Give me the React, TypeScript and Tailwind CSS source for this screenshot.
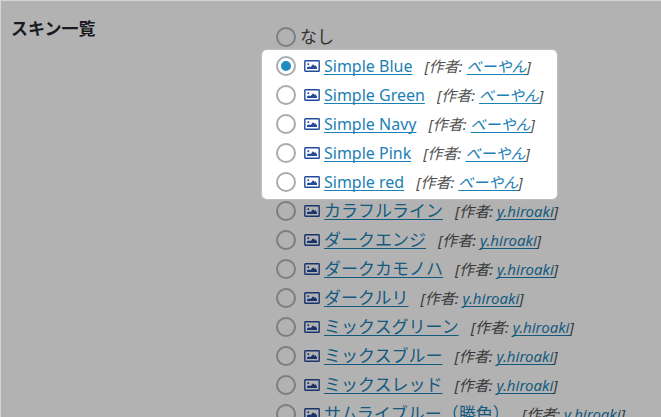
import { useState } from "react";
import clsx from "clsx";

type Skin = { id: string; name: string; author: string };

const FEATURED: Skin[] = [
  { id: "simple-blue", name: "Simple Blue", author: "べーやん" },
  { id: "simple-green", name: "Simple Green", author: "べーやん" },
  { id: "simple-navy", name: "Simple Navy", author: "べーやん" },
  { id: "simple-pink", name: "Simple Pink", author: "べーやん" },
  { id: "simple-red", name: "Simple red", author: "べーやん" },
];

const OTHERS: Skin[] = [
  { id: "colorful-line", name: "カラフルライン", author: "y.hiroaki" },
  { id: "dark-engi", name: "ダークエンジ", author: "y.hiroaki" },
  { id: "dark-kamonoha", name: "ダークカモノハ", author: "y.hiroaki" },
  { id: "dark-ruri", name: "ダークルリ", author: "y.hiroaki" },
  { id: "mix-green", name: "ミックスグリーン", author: "y.hiroaki" },
  { id: "mix-blue", name: "ミックスブルー", author: "y.hiroaki" },
  { id: "mix-red", name: "ミックスレッド", author: "y.hiroaki" },
  { id: "samurai-blue", name: "サムライブルー（勝色）", author: "y.hiroaki" },
];

function PictureIcon({ dimmed }: { dimmed?: boolean }) {
  return (
    <svg
      viewBox="0 0 16 12"
      className={clsx("ml-2 h-3 w-4 shrink-0", dimmed ? "text-[#19346d]" : "text-[#244a9c]")}
      aria-hidden="true"
    >
      <rect x="0.8" y="0.7" width="14.4" height="10.6" rx="0.6" fill="none" stroke="currentColor" strokeWidth="1.4" />
      <rect x="3.4" y="3.2" width="1.7" height="1.7" rx="0.5" fill="currentColor" />
      <path d="M3 9V7.4l1.5-.9 2.2.6L9 4.2l1.5 1.6 1-.5L13 7.6V9z" fill="currentColor" />
    </svg>
  );
}

type RadioProps = { id: string; checked: boolean; dimmed?: boolean; onSelect: (id: string) => void };

function Radio({ id, checked, dimmed, onSelect }: RadioProps) {
  return (
    <input
      type="radio"
      name="skin"
      id={id}
      checked={checked}
      onChange={() => onSelect(id)}
      className={clsx(
        "grid size-5 shrink-0 appearance-none place-content-center rounded-full border-2",
        "before:size-[10px] before:rounded-full before:bg-[#1e8cbe] before:opacity-0 checked:before:opacity-100",
        dimmed ? "border-[#7a7e82]" : "border-[#a6acb2] bg-white",
      )}
    />
  );
}

type RowProps = { skin: Skin; selected: string; dimmed?: boolean; onSelect: (id: string) => void };

function SkinRow({ skin, selected, dimmed, onSelect }: RowProps) {
  const link = clsx(
    "underline decoration-1 underline-offset-2 [text-decoration-skip-ink:none]",
    dimmed ? "text-[#145a7f]" : "text-[#1b80b5]",
  );

  return (
    <div className="flex h-[29px] items-center whitespace-nowrap">
      <Radio id={skin.id} checked={selected === skin.id} dimmed={dimmed} onSelect={onSelect} />
      <label htmlFor={skin.id} className={clsx("flex items-center gap-1", !dimmed && "text-[16px]")}>
        <PictureIcon dimmed={dimmed} />
        <a href={`#${skin.id}`} className={link}>
          {skin.name}
        </a>
      </label>
      <span className={clsx("ml-3 text-[15px] italic", dimmed ? "text-[#383838]" : "text-[#505050]")}>
        [作者:{" "}
        <a href="#author" className={link}>
          {skin.author}
        </a>
        ]
      </span>
    </div>
  );
}

export default function App() {
  const [selected, setSelected] = useState("simple-blue");

  return (
    <main className="h-screen overflow-hidden border-t border-l border-[#d4d4d4] bg-[#b2b2b2] font-['Noto_Sans','Noto_Sans_CJK_JP',sans-serif] text-[17px] leading-6">
      <div role="radiogroup" aria-labelledby="skin-heading" className="flex pt-[21px]">
        <h2
          id="skin-heading"
          className="w-[261px] shrink-0 pl-[10px] text-[17px] leading-3.5 font-bold text-[#191b1e]"
        >
          スキン一覧
        </h2>
        <div className="min-w-0 flex-1">
          <div className="flex h-[29px] items-center gap-1 px-[14px]">
            <Radio id="none" checked={selected === "none"} dimmed onSelect={setSelected} />
            <label htmlFor="none" className="text-[#333333]">
              なし
            </label>
          </div>
          <div className="-mt-[1px] -mb-[3px] w-fit rounded-[5px] bg-white px-[14px] pt-[1px] pb-[3px] shadow-[0_0_2px_rgba(255,255,255,0.6)]">
            {FEATURED.map((skin) => (
              <SkinRow key={skin.id} skin={skin} selected={selected} onSelect={setSelected} />
            ))}
          </div>
          <div className="px-[14px]">
            {OTHERS.map((skin) => (
              <SkinRow key={skin.id} skin={skin} selected={selected} dimmed onSelect={setSelected} />
            ))}
          </div>
        </div>
      </div>
    </main>
  );
}
